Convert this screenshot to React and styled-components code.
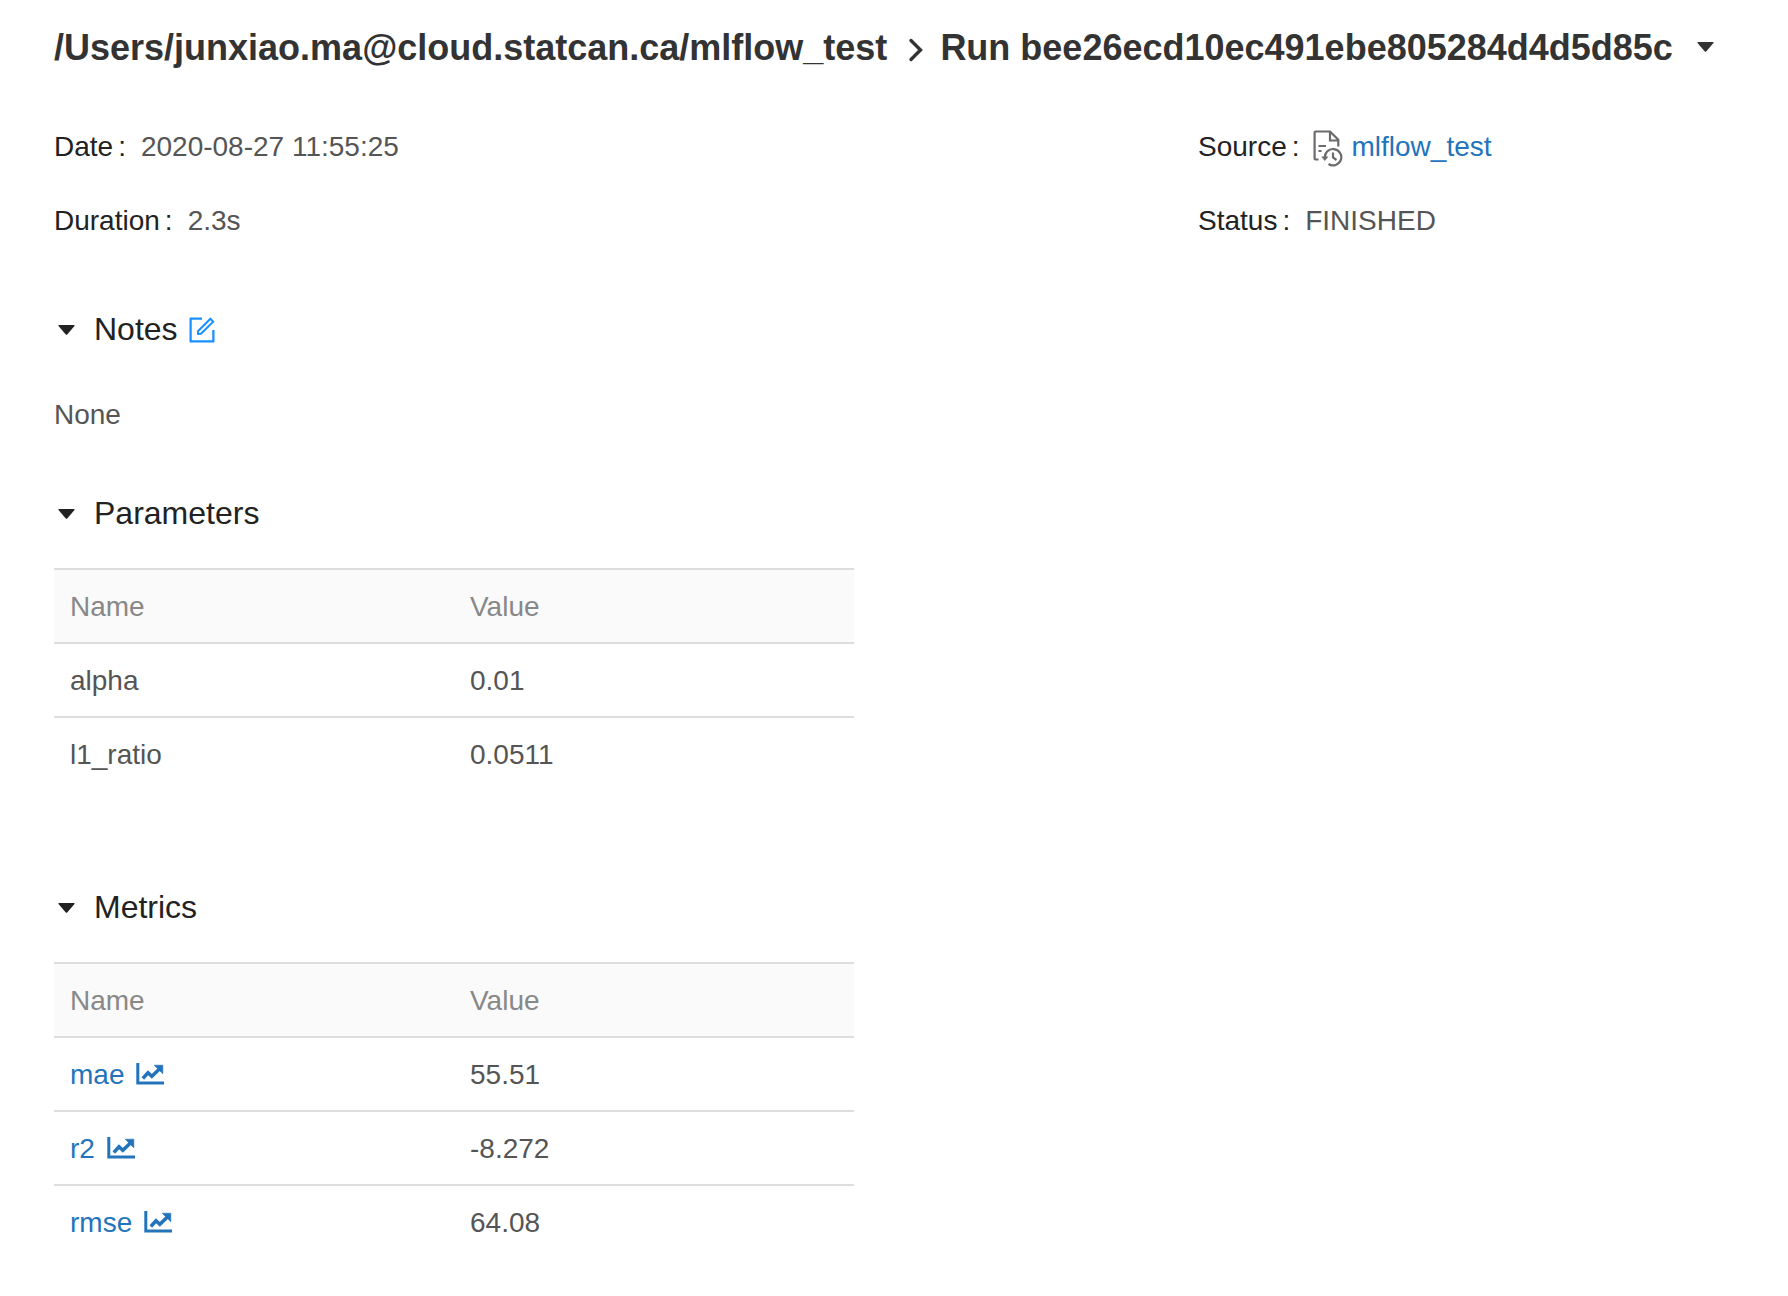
import React from 'react';
import styled, { createGlobalStyle } from 'styled-components';
import { AiOutlineForm } from 'react-icons/ai';

const GlobalStyle = createGlobalStyle`
  * { box-sizing: border-box; }
  body {
    margin: 0;
    background: #fff;
    color: #555;
    font-family: Helvetica, "Liberation Sans", Arial, sans-serif;
    font-size: 28px;
    line-height: 40px;
  }
`;

const Page = styled.main`
  min-height: 1296px;
  padding: 28px 54px 0;
  overflow: hidden;
`;

const Breadcrumb = styled.h1`
  display: flex;
  align-items: center;
  margin: 0 0 42px;
  color: #333;
  font-size: 36px;
  font-weight: 700;
  line-height: 40px;
  white-space: nowrap;
`;

const Chevron = styled.svg`
  flex: none;
  width: 16px;
  height: 24px;
  margin: 4px 16px 0 21px;
`;

const Caret = styled.svg`
  flex: none;
  width: 17px;
  height: 10px;
  margin-top: 2px;
  fill: currentColor;
`;

const TitleCaret = styled(Caret)`
  margin-left: 24px;
  margin-top: -2px;
`;

const Metadata = styled.dl`
  display: grid;
  grid-template-columns: 1144px 1fr;
  grid-auto-rows: 74px;
  margin: 0 0 47px;
`;

const MetaItem = styled.div`
  display: flex;
  align-items: center;
`;

const MetaLabel = styled.dt`
  color: #222;
  &::after {
    content: ':';
    margin: 0 15px 0 5px;
  }
`;

const MetaValue = styled.dd`
  display: flex;
  align-items: center;
  margin: 0;
`;

const Link = styled.a`
  color: #2374bb;
  text-decoration: none;
`;

const RevisionIcon = styled.svg`
  flex: none;
  width: 30px;
  height: 38px;
  margin: 2px 9px 0 -2px;
  fill: none;
  stroke: #6b6b6b;
  stroke-width: 2.2;
`;

const SectionHeader = styled.h2`
  display: flex;
  align-items: center;
  height: 48px;
  margin: 0;
  padding-left: 4px;
  color: #222;
  font-size: 32px;
  font-weight: 400;
  line-height: 48px;
`;

const SectionTitle = styled.span`
  margin-left: 19px;
`;

const EditIcon = styled(AiOutlineForm)`
  width: 32px;
  height: 32px;
  margin: 2px 0 0 8px;
  color: #1890ff;
`;

const Note = styled.p`
  margin: 42px 0 54px;
`;

const Table = styled.div`
  width: 800px;
  margin: 31px 0 93px;
`;

const Row = styled.div`
  display: grid;
  grid-template-columns: 400px 400px;
  height: 74px;
  border-top: 2px solid #ddd;
  background: ${(p) => (p.$head ? '#fafafa' : '#fff')};
  color: ${(p) => (p.$head ? '#888' : '#555')};
`;

const Cell = styled.div`
  display: flex;
  align-items: center;
  padding: 2px 16px 0;
`;

const MetricLink = styled(Link)`
  display: flex;
  align-items: center;
  gap: 12px;
`;

const ChartIcon = styled.svg`
  width: 28px;
  height: 22px;
  margin-top: -2px;
  fill: currentColor;
`;

const params = [
  ['alpha', '0.01'],
  ['l1_ratio', '0.0511'],
];

const metrics = [
  ['mae', '55.51'],
  ['r2', '-8.272'],
  ['rmse', '64.08'],
];

function Meta({ label, children }) {
  return (
    <MetaItem>
      <MetaLabel>{label}</MetaLabel>
      <MetaValue>{children}</MetaValue>
    </MetaItem>
  );
}

function Section({ title, action }) {
  return (
    <SectionHeader>
      <Caret viewBox="0 0 17 10">
        <path d="M1 0h15q1 0 .5 1L9.200 9.500q-.7.7-1.400 0L.5 1Q0 0 1 0z" />
      </Caret>
      <SectionTitle>{title}</SectionTitle>
      {action}
    </SectionHeader>
  );
}

function LineChart() {
  return (
    <ChartIcon viewBox="0 0 28 22">
      <path d="M.3 0H3.300V18.500H28V21.500H.3Z" />
      <path d="M6.800 15.500 12 9.800 15.800 13.300 23.500 6" fill="none" stroke="currentColor" strokeWidth="3.500" />
      <path d="M18.200 2.200H26.800V10.800Z" stroke="currentColor" strokeWidth=".6" strokeLinejoin="round" />
    </ChartIcon>
  );
}

function DataTable({ rows, linked }) {
  return (
    <Table>
      <Row $head>
        <Cell>Name</Cell>
        <Cell>Value</Cell>
      </Row>
      {rows.map(([name, value]) => (
        <Row key={name}>
          <Cell>
            {linked ? (
              <MetricLink>
                {name}
                <LineChart />
              </MetricLink>
            ) : (
              name
            )}
          </Cell>
          <Cell>{value}</Cell>
        </Row>
      ))}
    </Table>
  );
}

export default function App() {
  return (
    <Page>
      <GlobalStyle />
      <Breadcrumb>
        <span>/Users/junxiao.ma@cloud.statcan.ca/mlflow_test</span>
        <Chevron viewBox="0 0 16 24" fill="none" stroke="currentColor" strokeWidth="3.4" strokeLinecap="round">
          <path d="M3 2.500 12.500 12 3 21.500" />
        </Chevron>
        <span>Run bee26ecd10ec491ebe805284d4d5d85c</span>
        <TitleCaret viewBox="0 0 17 10">
          <path d="M1 0h15q1 0 .5 1L9.200 9.500q-.7.7-1.400 0L.5 1Q0 0 1 0z" />
        </TitleCaret>
      </Breadcrumb>

      <Metadata>
        <Meta label="Date">2020-08-27 11:55:25</Meta>
        <Meta label="Source">
          <RevisionIcon viewBox="0 0 30 38">
            <path d="M5.500 30.500H2.600Q1.600 30.500 1.600 29.500V3.500Q1.600 2.500 2.600 2.500H17L25.300 10.800V17.500M17 2.500V11.500H25.500" />
            <path d="M5.500 17H13M5.500 22H8.500" />
            <path d="M12 29.500A8.200 8.200 0 1 1 15.500 35M20 23.500V28.500L23.500 31" />
            <path d="M8.300 27.500H15.500L11.800 32Z" fill="#6b6b6b" stroke="none" />
          </RevisionIcon>
          <Link>mlflow_test</Link>
        </Meta>
        <Meta label="Duration">2.3s</Meta>
        <Meta label="Status">FINISHED</Meta>
      </Metadata>

      <Section title="Notes" action={<EditIcon />} />
      <Note>None</Note>

      <Section title="Parameters" />
      <DataTable rows={params} />

      <Section title="Metrics" />
      <DataTable rows={metrics} linked />
    </Page>
  );
}
